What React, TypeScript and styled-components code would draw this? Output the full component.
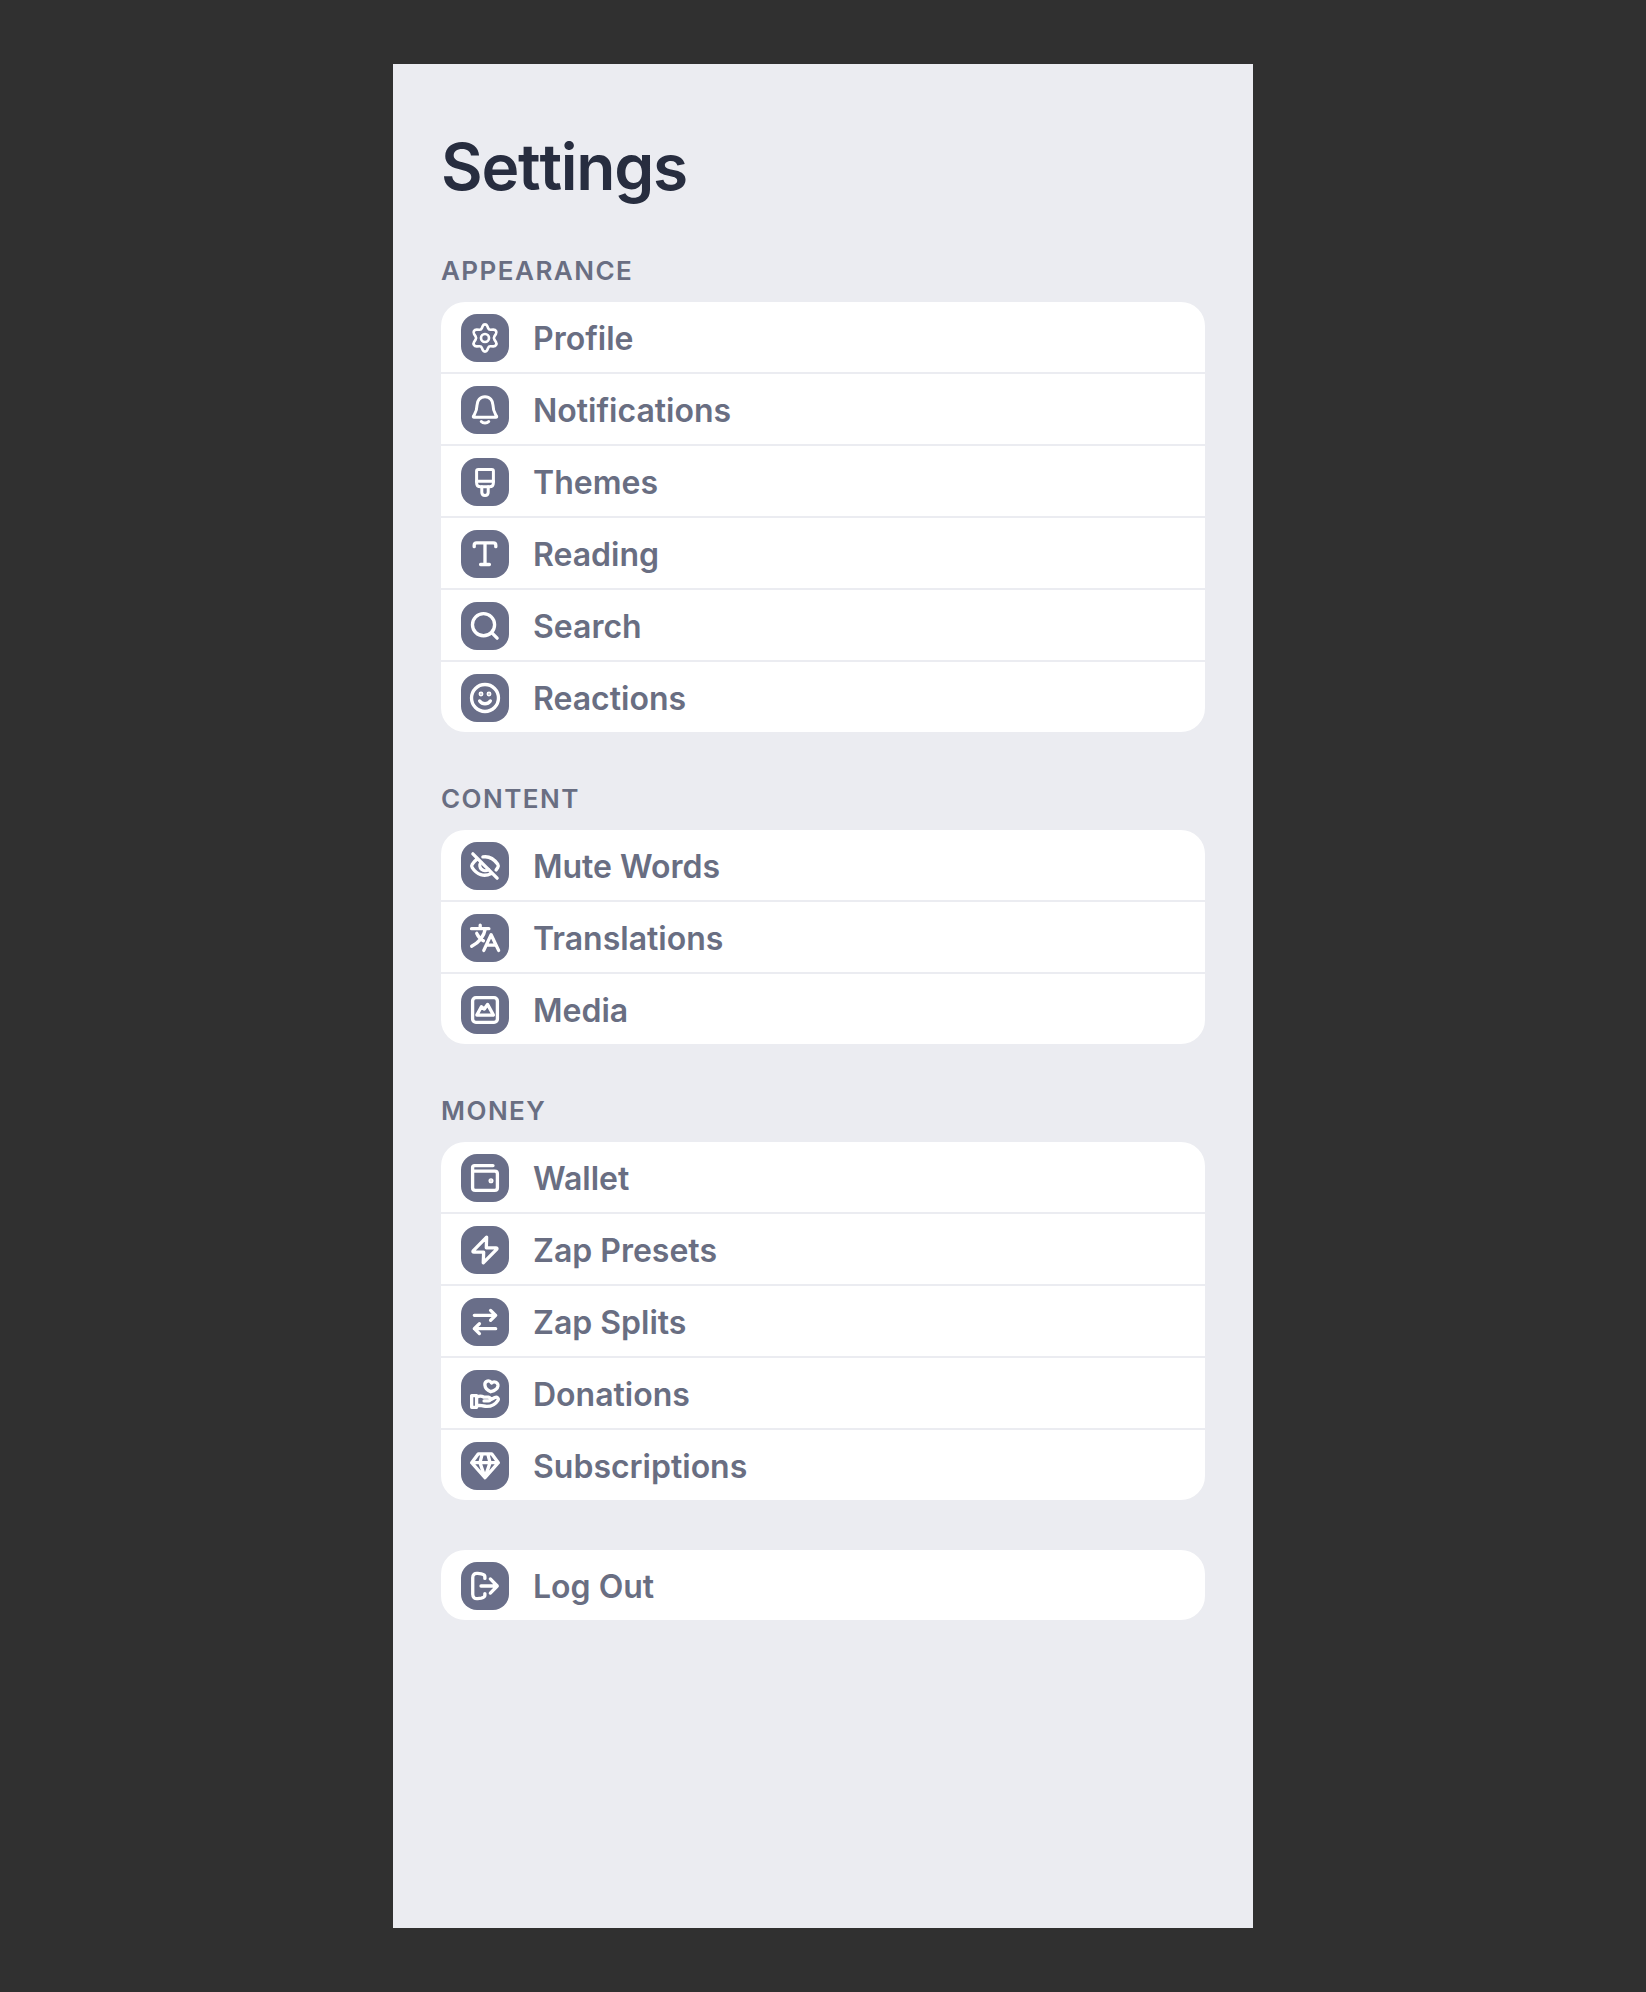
import React from "react";
import styled, { createGlobalStyle } from "styled-components";

const GlobalStyle = createGlobalStyle`
  body { margin: 0; background: #303030; font-family: Inter, "Liberation Sans", sans-serif; }
`;

const Page = styled.div`
  box-sizing: border-box;
  min-height: 1992px;
  padding: 64px 0;
  display: flex;
  justify-content: center;
`;

const Screen = styled.main`
  box-sizing: border-box;
  width: 860px;
  padding: 63px 48px 0;
  background: #ebecf1;
`;

const Title = styled.h1`
  margin: 0;
  font-size: 64px;
  line-height: 80px;
  font-weight: 600;
  font-kerning: none;
  letter-spacing: -0.019em;
  color: #272d3f;
`;

const Label = styled.h2`
  margin: 0 0 14px;
  font-size: 26px;
  line-height: 34px;
  font-weight: 600;
  letter-spacing: 0.056em;
  text-transform: uppercase;
  color: #696e82;
`;

const Section = styled.section<{ $gap: number }>`
  margin-top: ${(p) => p.$gap}px;
`;

const Card = styled.div`
  display: flex;
  flex-direction: column;
  gap: 2px;
  border-radius: 24px;
  overflow: hidden;
`;

const Row = styled.div`
  box-sizing: border-box;
  height: 70px;
  padding: 12px 20px 10px;
  display: flex;
  align-items: flex-start;
  gap: 24px;
  background: #fff;
`;

const Tile = styled.span`
  width: 48px;
  height: 48px;
  flex: none;
  display: flex;
  align-items: center;
  justify-content: center;
  border-radius: 16px;
  background: #696e89;
`;

const Glyph = styled.svg<{ $weight: number }>`
  width: 32px;
  height: 32px;
  overflow: visible;
  fill: none;
  stroke: #fff;
  stroke-width: ${(p) => p.$weight};
  stroke-linecap: round;
  stroke-linejoin: round;
`;

const Name = styled.span`
  font-size: 32px;
  line-height: 50px;
  font-weight: 600;
  color: #696e82;
`;

const icons: Record<string, React.ReactNode> = {
  Profile: (
    <>
      <circle cx="12" cy="12" r="3" />
      <path d="M10.3 3c.7-1.6 2.700-1.600 3.400 0l.7 1.700c.3.8 1.100 1.200 1.900 1.100l1.800-.1c2-.1 3.100 1.700 2.100 3.300l-1.100 1.700c-.5.8-.5 1.900 0 2.700L20.200 15c1 1.600-.1 3.400-2.100 3.300l-1.800-.1c-.8-.1-1.600.3-1.900 1.100l-.7 1.700c-.7 1.600-2.700 1.600-3.400 0l-.7-1.700c-.3-.8-1.100-1.200-1.900-1.100l-1.800.1c-2 .1-3.100-1.700-2.100-3.300l1.100-1.600c.5-.8.5-1.900 0-2.700L3.800 9c-1-1.600.1-3.400 2.100-3.300l1.800.1c.8.1 1.600-.3 1.900-1.100z" />
    </>
  ),
  Notifications: (
    <>
      <path d="M12 2C8.300 2 6 4.900 6 8.400C6 13 4.300 14.700 3.300 16.700Q3 17.500 3.800 17.500H20.200Q21 17.500 20.700 16.700C19.700 14.700 18 13 18 8.400C18 4.900 15.700 2 12 2Z" />
      <path d="M9.200 20.700C10.600 22.200 13.400 22.200 14.800 20.700" />
    </>
  ),
  Themes: (
    <>
      <path d="M5.700 3.800Q5.700 2.600 6.900 2.600H17.100Q18.300 2.600 18.300 3.800V12.500Q18.300 15.500 15.300 15.500H8.700Q5.700 15.500 5.700 12.500Z" />
      <path d="M5.700 11.500H18.300M9.600 15.500V19.600Q9.600 22.100 12 22.100T14.400 19.600V15.500" />
    </>
  ),
  Reading: <path d="M3.900 6.500V5.500Q3.900 3.700 5.700 3.700H18.300Q20.100 3.700 20.100 5.500V6.500M12 3.700V19.900M8.700 19.900H15.300" />,
  Search: <path d="M19.200 11A8.300 8.300 0 1 1 2.600 11A8.300 8.300 0 0 1 19.200 11ZM17 17L21.100 21.100" />,
  Reactions: (
    <>
      <circle cx="12" cy="12" r="10.1" />
      <path d="M8 14.200C10 17 14 17 16 14.200" />
      <circle cx="9" cy="9" r=".6" fill="#fff" />
      <circle cx="15" cy="9" r=".6" fill="#fff" />
    </>
  ),
  "Mute Words": (
    <>
      <path d="M2.900 2.900L21.100 21.100M10.400 5.200C15 4.400 18.900 6.900 21.600 10.700Q22.400 12 21.600 13.200L20.300 15M5.800 7.100Q3.900 8.500 2.400 10.800Q1.600 12 2.400 13.200C5.800 18.500 11.400 20.500 16.600 17.600" />
      <path d="M8.900 9.300C7.700 11 8 13.200 9.400 14.500C10.900 15.900 13.100 15.800 14.600 14.600" />
    </>
  ),
  Translations: <path d="M1.900 5H14.900M8.400 2.400V5M12.300 5C11.200 10.800 7.700 15.300 2 18.200M5.800 8.500C7 11.300 8.600 12.800 10.800 14M11.100 21.300L16.600 9.500L22.200 21.300M13.200 17.300H20.200" />,
  Media: (
    <>
      <rect x="2.700" y="2.700" width="18.600" height="18.600" rx="2.500" />
      <path d="M5.900 15.800L9.300 9.600L11.500 11.300L13.900 7.800L18.300 15.800Z" />
    </>
  ),
  Wallet: (
    <>
      <path d="M18 2.700H4.200Q2.700 2.700 2.700 4.200V19.300Q2.700 21.300 4.700 21.300H19.300Q21.300 21.300 21.300 19.300V8.800Q21.300 6.800 19.300 6.800H2.700" />
      <circle cx="16.500" cy="14" r=".65" fill="#fff" />
    </>
  ),
  "Zap Presets": <path d="M13.200 2.300L3.100 12.700Q2.600 13.600 3.700 13.600H11L10.700 21.700L20.900 11.300Q21.300 10.400 20.200 10.400H13Z" />,
  "Zap Splits": <path d="M4 7H20M16.200 3.300L20 7L16.200 10.700M20 17H4M7.800 13.300L4 17L7.800 20.700" />,
  Donations: (
    <>
      <path d="M16.900 3.700C15.400 1.100 11.700 2 11.900 5.200C12.100 7.600 14 9.400 16.300 10.300C18.700 9.700 21.300 8.600 21.700 6C22 3.300 18.800 2 16.900 3.700Z" />
      <path d="M2 13.200H5.700V22H2ZM5.700 14.500C7.600 13.400 9.400 13.400 11 14.300H14.500Q16 14.500 16 15.800T14.500 17.200H11.300M15.800 16.500L19.400 14.600C21 13.800 22.700 15.400 21.600 16.900C19.600 20 16 21.500 12.300 21.200C9.500 21 8 20.100 5.700 20.500" />
    </>
  ),
  Subscriptions: <path d="M7 2.900H17L22 9.500L12 20.800L2 9.500ZM2 9.500H22M9.900 3L8.200 9.500L12 20.500L15.800 9.500L14.100 3" />,
  "Log Out": <path d="M11.900 6.300V5C11.900 3.600 10.800 3.200 9.200 2.900L6.500 2.600C4.200 2.300 2.800 3.600 2.800 5.800V18.200C2.800 20.400 4.200 21.700 6.500 21.400L9.200 21.100C10.800 20.800 11.900 20.400 11.900 19V17.700M9 12H21.200M16 6.700L21.200 12L16 17.300" />,
};

const lineWeights: Record<string, number> = {
  Profile: 2,
  Notifications: 2.25,
  Themes: 2.25,
};

const groups = [
  { label: "Appearance", gap: 47, items: ["Profile", "Notifications", "Themes", "Reading", "Search", "Reactions"] },
  { label: "Content", gap: 50, items: ["Mute Words", "Translations", "Media"] },
  { label: "Money", gap: 50, items: ["Wallet", "Zap Presets", "Zap Splits", "Donations", "Subscriptions"] },
  { label: "", gap: 50, items: ["Log Out"] },
];

export default function App() {
  return (
    <Page>
      <GlobalStyle />
      <Screen>
        <Title>Settings</Title>
        {groups.map((group) => (
          <Section key={group.items[0]} $gap={group.gap}>
            {group.label && <Label>{group.label}</Label>}
            <Card>
              {group.items.map((item) => (
                <Row key={item}>
                  <Tile>
                    <Glyph viewBox="0 0 24 24" $weight={lineWeights[item] ?? 2.5}>
                      {icons[item]}
                    </Glyph>
                  </Tile>
                  <Name>{item}</Name>
                </Row>
              ))}
            </Card>
          </Section>
        ))}
      </Screen>
    </Page>
  );
}
